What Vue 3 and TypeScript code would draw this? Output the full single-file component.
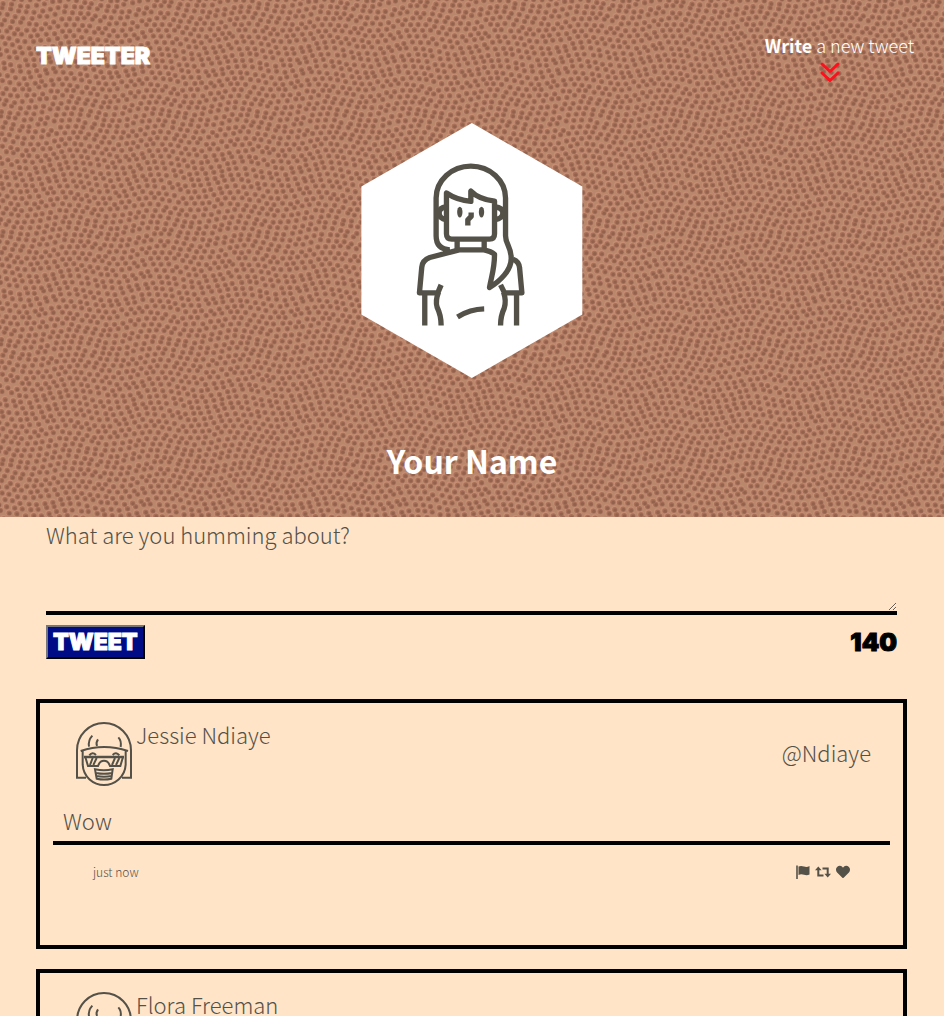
<script setup lang="ts">
import { ref, computed } from 'vue'

interface Tweet {
  id: number
  name: string
  handle: string
  text: string
  age: string
}

interface Dot {
  x: number
  y: number
}

const limit = 140
const draft = ref('')
const remaining = computed(() => limit - draft.value.length)

const tweets = ref<Tweet[]>([
  { id: 1, name: 'Jessie Ndiaye', handle: '@Ndiaye', text: 'Wow', age: 'just now' },
  { id: 2, name: 'Flora Freeman', handle: '@Freeman', text: 'Wow', age: 'just now' },
])

function post(): void {
  const text = draft.value.trim()
  if (!text || remaining.value < 0) return
  tweets.value.unshift({ id: Date.now(), name: 'Your Name', handle: '@You', text, age: 'just now' })
  draft.value = ''
}

// Leather grain: a staggered grid of jittered dots that repeats seamlessly.
const columns = 32
const rows = 38
const stepX = 8
const stepY = 6
const tileWidth = columns * stepX
const tileHeight = rows * stepY

function makeDots(): Dot[] {
  let seed = 7
  const random = () => {
    seed = (seed * 16807) % 2147483647
    return seed / 2147483647 - 0.5
  }
  const dots: Dot[] = []
  for (let r = 0; r < rows; r++) {
    for (let c = 0; c < columns; c++) {
      const wave = Math.sin((c / columns) * Math.PI * 6) * 3
      const sway = Math.sin((r / rows) * Math.PI * 4) * 6
      dots.push({
        x: 4 + c * stepX + (r % 2) * 4 + sway + random() * 1.8,
        y: 3 + r * stepY + wave + random() * 1.8,
      })
    }
  }
  const wrapped: Dot[] = []
  for (const d of dots) {
    for (const dx of [-tileWidth, 0, tileWidth]) {
      for (const dy of [-tileHeight, 0, tileHeight]) {
        const x = d.x + dx
        const y = d.y + dy
        if (x > -5 && x < tileWidth + 5 && y > -5 && y < tileHeight + 5) wrapped.push({ x, y })
      }
    }
  }
  return wrapped
}

const dots = makeDots()
</script>

<template>
  <div class="page">
    <header class="banner">
      <svg class="grain" aria-hidden="true">
        <defs>
          <pattern id="leather" :width="tileWidth" :height="tileHeight" patternUnits="userSpaceOnUse">
            <rect :width="tileWidth" :height="tileHeight" fill="#b9876c" />
            <circle v-for="(d, i) in dots" :key="'h' + i" :cx="d.x - 0.5" :cy="d.y - 0.6" r="3.3" fill="#c68d73" />
            <circle v-for="(d, i) in dots" :key="'d' + i" :cx="d.x" :cy="d.y" r="2.7" fill="#a77058" />
            <circle v-for="(d, i) in dots" :key="'c' + i" :cx="d.x + 0.3" :cy="d.y + 0.3" r="1.7" fill="#93624d" />
          </pattern>
        </defs>
        <rect width="100%" height="100%" fill="url(#leather)" />
      </svg>

      <nav class="nav">
        <a class="logo" href="#">TWEETER</a>
        <a class="compose-link" href="#tweet-text">
          <span><b>Write</b> a new tweet</span>
          <svg class="chevrons" viewBox="0 0 20 20" aria-hidden="true">
            <path d="M2 2l8 7.500 8-7.500M2 11l8 7.500 8-7.500" />
          </svg>
        </a>
      </nav>

      <svg class="portrait" viewBox="35 38 663 764" role="img" aria-label="Profile picture">
        <polygon points="366,38 697,228 697,612 366,802 35,612 35,228" fill="#fff" />
        <g class="ink">
          <path d="M300 418Q259 416 259 376V263A104 96 0 0 1 467 263V376C467 402 484 408 484 444C484 480 450 512 419 531C424 500 434 476 434 432Q424 422 402 418H328L240 441Q218 449 216 470L209 547H264L274 523" />
          <path d="M290 248V370Q290 386 306 386H419Q434 386 434 370V272Q386 266 363 242V273Q323 270 290 248Z" />
          <path d="M322 386V418M403 386V418M290 289Q268 291 268 308T290 328M434 289Q459 291 459 308T434 328" />
          <path d="M489 446Q508 453 509 472L516 547H464L452 523M225 547V645M500 547V645" />
          <path d="M266 545Q256 571 262 590Q274 614 274 645M461 545Q470 571 463 593Q452 616 452 645M323 619Q361 596 403 595" />
          <path d="M364 306V318L354 328V345" />
        </g>
        <ellipse cx="330" cy="305" rx="8" ry="16" fill="#545149" />
        <ellipse cx="395" cy="305" rx="8" ry="16" fill="#545149" />
      </svg>

      <h1 class="user-name">Your Name</h1>
    </header>

    <main class="content">
      <form class="composer" @submit.prevent="post">
        <textarea id="tweet-text" v-model="draft" aria-label="Tweet text" placeholder="What are you humming about?"></textarea>
        <div class="composer-bar">
          <button type="submit" class="submit">TWEET</button>
          <output class="counter" for="tweet-text">{{ remaining }}</output>
        </div>
      </form>

      <section class="feed" aria-label="Tweets">
        <article v-for="tweet in tweets" :key="tweet.id" class="tweet">
          <header class="tweet-head">
            <svg class="avatar" viewBox="18 20 168 192" aria-hidden="true">
              <path d="M48 187H21V105A81 82 0 0 1 183 105V187H156" />
              <path d="M32 107Q102 83 174 107M38 106V148C40 185 70 209 102 209S165 185 167 148V106" />
              <path d="M57 94Q54 75 67 61M81 92Q77 82 84 72M145 66Q155 76 152 95" />
              <path d="M58 120Q67 108 78 119M128 119Q138 108 148 120" />
              <path d="M42 125H162" stroke-width="8" />
              <path d="M46 125L54 152H84Q89 136 102 136T120 152H151L159 125M68 128L60 149M80 128L70 149M135 128L126 149M148 128L138 149" />
              <path d="M75 162Q102 168 128 162L124 190Q102 195 80 190ZM78 173Q102 178 126 173M79 182Q102 186 125 182" />
            </svg>
            <span class="author">{{ tweet.name }}</span>
            <span class="handle">{{ tweet.handle }}</span>
          </header>
          <p class="tweet-text">{{ tweet.text }}</p>
          <footer class="tweet-foot">
            <time>{{ tweet.age }}</time>
            <span class="actions">
              <button type="button" aria-label="Report">
                <svg viewBox="0 0 14 14"><path d="M0 0.500h2v13.500H0z" opacity="0.8" /><path d="M2.500 1.500Q5 0.500 8 1.500T13.500 1V9.500Q11 10.800 8 9.800T2.500 10z" /></svg>
              </button>
              <button type="button" class="retweet" aria-label="Retweet">
                <svg viewBox="0 0 16 14"><path d="M0 5.200L3.300 1.500 6.600 5.200H4.300V9.500H8.500V11.500H2.300V5.200zM7.500 2.500H13.700V8.800H16L12.700 12.500 9.400 8.800H11.700V4.500H7.500z" /></svg>
              </button>
              <button type="button" aria-label="Like">
                <svg viewBox="0 0 512 512"><path d="M462 63C407 16 326 24 276 76L256 96 236 76C186 24 104 16 50 63C-13 116 -16 212 40 270L233 470C246 483 266 483 279 470L472 270C528 212 525 116 462 63Z" /></svg>
              </button>
            </span>
          </footer>
        </article>
      </section>
    </main>
  </div>
</template>

<style>
body {
  margin: 0;
  background: #ffe4c7;
}
</style>

<style scoped>
.page {
  color: #545149;
  font-family: "Noto Sans CJK JP", "Open Sans", sans-serif;
  font-weight: 300;
  font-size: 22px;
  line-height: 34px;
}
.page * {
  box-sizing: border-box;
}
.banner {
  position: relative;
  display: flex;
  flex-direction: column;
  align-items: center;
  height: 517px;
  color: #fff;
}
.grain {
  position: absolute;
  inset: 0;
  width: 100%;
  height: 100%;
}
.nav,
.portrait,
.user-name {
  position: relative;
}
.nav {
  display: flex;
  justify-content: space-between;
  width: 100%;
  height: 123px;
  padding: 31px 30px 0 35px;
}
.nav a {
  color: #fff;
  text-decoration: none;
}
.logo,
.submit,
.counter {
  font-family: Inter, sans-serif;
  font-weight: 900;
  font-size: 23px;
  -webkit-text-stroke: 1px currentColor;
}
.logo {
  padding: 8px 0 0 1px;
}
.compose-link {
  font-size: 18px;
  line-height: 28px;
}
.compose-link b {
  font-weight: 700;
}
.chevrons {
  display: block;
  width: 20px;
  height: 20px;
  margin: 3px 0 0 55px;
  fill: none;
  stroke: #ff0f1c;
  stroke-width: 3;
  stroke-linecap: round;
  stroke-linejoin: round;
}
.portrait {
  display: block;
  width: 222px;
  height: 255px;
}
.ink {
  fill: none;
  stroke: #545149;
  stroke-width: 16;
  stroke-linejoin: round;
}
.user-name {
  margin: 58px 0 0;
  font-size: 32px;
  line-height: 48px;
  font-weight: 700;
}
.content {
  padding: 0 37px 0 36px;
}
.composer {
  padding: 0 10px;
}
.composer textarea {
  display: block;
  width: 100%;
  height: 98px;
  padding: 0;
  border: 0;
  border-bottom: 4px solid #000;
  background: transparent;
  color: #545149;
  font: inherit;
  outline: 0;
  resize: vertical;
}
.composer textarea::placeholder {
  color: #545149;
  opacity: 1;
}
.composer-bar {
  display: flex;
  justify-content: space-between;
  align-items: center;
  margin-top: 10px;
  line-height: 28px;
}
.submit {
  height: 34px;
  padding: 0 5px;
  border: 2px outset #545149;
  border-color: #76767a #25252b #25252b #76767a;
  background: #000b86;
  color: #fff;
  line-height: 28px;
}
.counter {
  color: #000;
  font-size: 25px;
}
.feed {
  display: grid;
  gap: 20px;
  padding: 40px 0 20px;
}
.tweet {
  height: 250px;
  padding: 19px 13px 0;
  border: 4px solid #000;
}
.tweet-head {
  display: flex;
  align-items: center;
  padding: 0 19px 0 23px;
}
.avatar {
  width: 56px;
  height: 64px;
  margin-right: 4px;
  fill: none;
  stroke: #545149;
  stroke-width: 6;
}
.author {
  align-self: flex-start;
  margin-top: -5px;
}
.handle {
  margin: 0 0 4px auto;
}
.tweet-text {
  margin: 17px 0 0;
  padding: 0 10px 4px;
  border-bottom: 4px solid #000;
}
.tweet-foot {
  display: flex;
  justify-content: space-between;
  align-items: center;
  padding: 17px 40px 0;
  font-size: 12px;
  line-height: 20px;
}
.actions {
  display: flex;
  gap: 5px;
}
.actions button {
  width: 14px;
  height: 14px;
  padding: 0;
  border: 0;
  background: none;
}
.actions .retweet {
  width: 16px;
}
.actions svg {
  display: block;
  width: 100%;
  height: 100%;
  fill: #545149;
}
</style>
